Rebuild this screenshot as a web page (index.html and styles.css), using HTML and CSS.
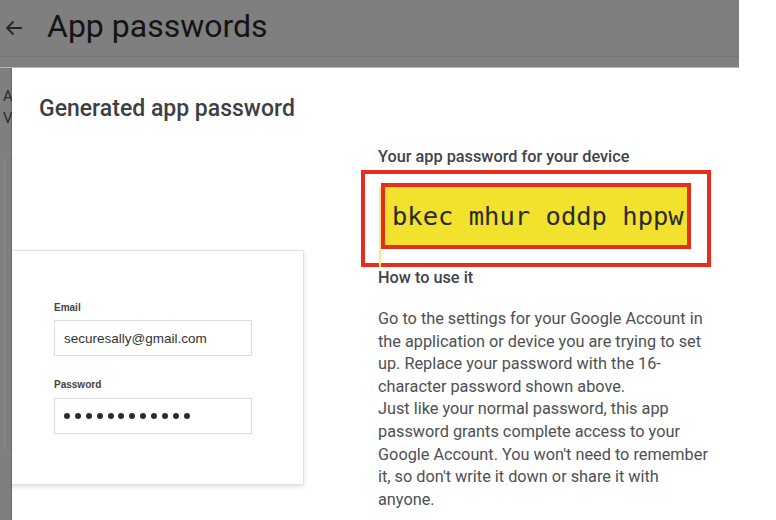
FILE: index.html
```html
<!DOCTYPE html>
<html>
<head>
<meta charset="utf-8">
<link rel="stylesheet" href="styles.css">
</head>
<body>
<div class="topbar">
  <div class="header">
    <svg class="back" width="18" height="16" viewBox="0 0 18 16"><path d="M17 8H2M8.5 1.5L2 8l6.5 6.5" fill="none" stroke="#262626" stroke-width="1.8"/></svg>
    <span class="page-title">App passwords</span>
  </div>
</div>
<div class="main">
  <div class="strip">
    <div class="behind-text">A<br>V</div>
    <div class="behind-card"></div>
  </div>
  <div class="dialog">
    <div class="left">
      <h1 class="title">Generated app password</h1>
      <div class="card">
        <div class="label">Email</div>
        <div class="input">securesally@gmail.com</div>
        <div class="label pw-label">Password</div>
        <div class="input dots">
          <span></span><span></span><span></span><span></span><span></span><span></span><span></span><span></span><span></span><span></span><span></span><span></span>
        </div>
      </div>
    </div>
    <div class="right">
      <div class="heading">Your app password for your device</div>
      <div class="outer-box">
        <div class="code">bkec mhur oddp hppw</div>
      </div>
      <div class="heading how">How to use it</div>
      <p class="body">Go to the settings for your Google Account in<br>the application or device you are trying to set<br>up. Replace your password with the 16-<br>character password shown above.<br>Just like your normal password, this app<br>password grants complete access to your<br>Google Account. You won't need to remember<br>it, so don't write it down or share it with<br>anyone.</p>
    </div>
  </div>
</div>
</body>
</html>
```
FILE: styles.css
```css
html, body {
  margin: 0;
  padding: 0;
  background: #ffffff;
  width: 776px;
  height: 520px;
  overflow: hidden;
}
.topbar {
  width: 739px;
  height: 68px;
  background: #7f7f7f;
  box-sizing: border-box;
  border-bottom: 1px solid #b8b8b8;
}
.header {
  height: 57px;
  box-sizing: border-box;
  border-bottom: 1px solid #737373;
  display: flex;
  align-items: center;
  padding-left: 5px;
}
.page-title {
  font-family: Roboto, "Liberation Sans", sans-serif;
  font-size: 32px;
  color: #141414;
  margin-left: 24px;
  margin-top: -4px;
}
.main {
  display: flex;
  height: 452px;
}
.strip {
  width: 12px;
  background: #7f7f7f;
  overflow: hidden;
  flex: none;
  box-shadow: inset -1px 0 1px rgba(0,0,0,0.18);
}
.behind-text {
  font-family: Roboto, "Liberation Sans", sans-serif;
  font-size: 15px;
  line-height: 22px;
  color: #2a2a2a;
  padding: 17px 0 0 3px;
}
.behind-card {
  margin: 24px 0 0 4px;
  height: 300px;
  width: 40px;
  border: 1px solid #8a8a8a;
  border-radius: 8px;
}
.dialog {
  flex: 1;
  background: #ffffff;
  display: flex;
  overflow: hidden;
}
.left {
  width: 366px;
  flex: none;
  padding-top: 27px;
  box-sizing: border-box;
}
.title {
  margin: 0 0 0 27px;
  font-family: Roboto, "Liberation Sans", sans-serif;
  font-weight: 500;
  font-size: 23px;
  line-height: 28px;
  color: #3c4043;
}
.card {
  margin-top: 127px;
  margin-left: -4px;
  width: 296px;
  height: 235px;
  box-sizing: border-box;
  border: 1px solid #e2e2e2;
  box-shadow: 0 2px 5px rgba(0,0,0,0.12);
  padding: 51px 0 0 45px;
}
.label {
  font-family: "Liberation Sans", Arial, sans-serif;
  font-weight: bold;
  font-size: 10px;
  line-height: 12px;
  color: #444444;
}
.pw-label {
  margin-top: 23px;
}
.input {
  margin-top: 6px;
  width: 198px;
  height: 36px;
  box-sizing: border-box;
  border: 1px solid #dcdcdc;
  font-family: "Liberation Sans", Arial, sans-serif;
  font-size: 13.5px;
  color: #333333;
  padding-left: 9px;
  display: flex;
  align-items: center;
}
.dots {
  margin-top: 7px;
  gap: 4.9px;
}
.dots span {
  width: 6px;
  height: 6px;
  border-radius: 50%;
  background: #2b2b2b;
}
.right {
  padding-top: 79px;
  flex: 1;
}
.heading {
  font-family: Roboto, "Liberation Sans", sans-serif;
  font-weight: 500;
  font-size: 16.3px;
  line-height: 20px;
  color: #40444a;
}
.how {
  margin-top: 1px;
}
.outer-box {
  margin: 3px 0 0 -17px;
  width: 350px;
  height: 97px;
  box-sizing: border-box;
  border: 4px solid #e62e1c;
  padding: 9px 0 0 16px;
}
.code {
  position: relative;
  width: 310px;
  height: 66px;
  box-sizing: border-box;
  border: 4px solid #e62e1c;
  background: #f2e22e;
  font-family: "DejaVu Sans Mono", monospace;
  font-size: 25.5px;
  color: #2a2a2a;
  display: flex;
  align-items: center;
  padding-left: 7px;
  white-space: nowrap;
}
.code::before {
  content: "";
  position: absolute;
  left: -6px;
  top: 0;
  width: 2px;
  height: 80px;
  background: #f5eb8a;
}
.body {
  margin: 20px 0 0 0;
  font-family: Roboto, "Liberation Sans", sans-serif;
  font-size: 16.3px;
  line-height: 22.6px;
  color: #4d5054;
  white-space: nowrap;
}
```
